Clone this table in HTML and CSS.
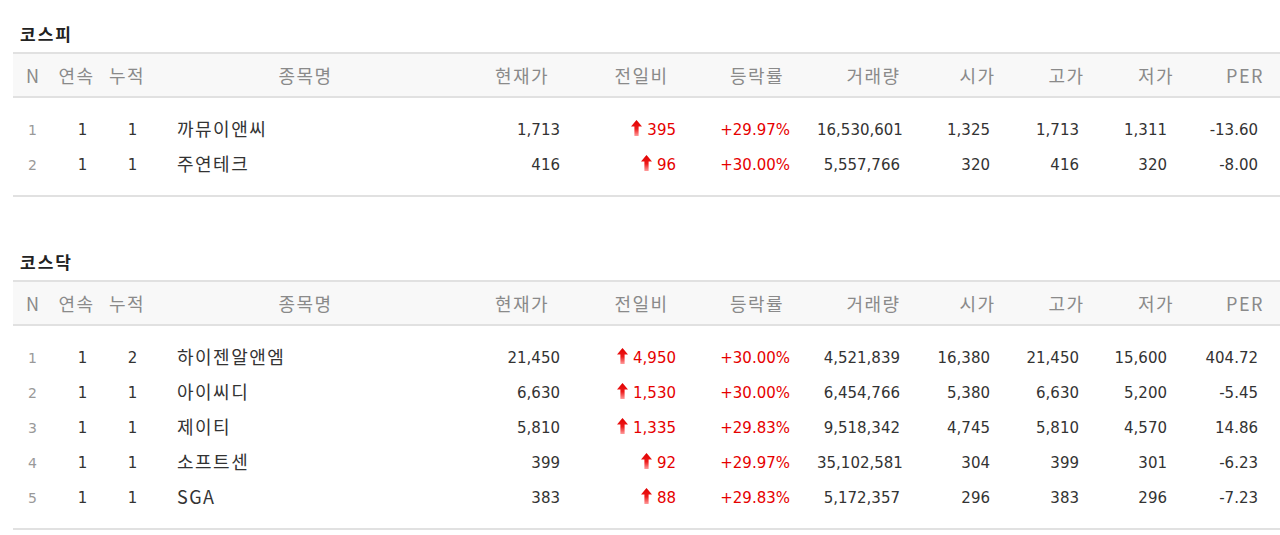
FILE: index.html
```html
<!DOCTYPE html>
<html lang="ko">
<head>
<meta charset="utf-8">
<title>상한가 종목</title>
<link rel="stylesheet" href="styles.css">
</head>
<body>
<svg class="defs" width="0" height="0" aria-hidden="true">
  <defs>
    <linearGradient id="up-grad" x1="0" y1="0" x2="0" y2="1">
      <stop offset="0" stop-color="#e00000"/>
      <stop offset="0.55" stop-color="#ee1c1c"/>
      <stop offset="1" stop-color="#ff9c9c"/>
    </linearGradient>
    <symbol id="up" viewBox="0 0 11 16">
      <polygon points="5.5,0 11,6.5 7.6,6.5 7.6,16 3.4,16 3.4,6.5 0,6.5" fill="url(#up-grad)"/>
    </symbol>
  </defs>
</svg>
<main class="page">
  <section class="market">
    <h2 class="market-title">코스피</h2>
    <div class="board">
      <div class="row head">
        <span class="idx">N</span><span class="run">연속</span><span class="acc">누적</span><span class="name">종목명</span><span class="price">현재가</span><span class="diff">전일비</span><span class="rate">등락률</span><span class="vol">거래량</span><span class="open">시가</span><span class="high">고가</span><span class="low">저가</span><span class="per">PER</span>
      </div>
      <div class="rows">
        <div class="row">
          <span class="idx">1</span><span class="run">1</span><span class="acc">1</span><span class="name">까뮤이앤씨</span><span class="price">1,713</span><span class="diff"><svg class="arrow"><use href="#up"/></svg>395</span><span class="rate">+29.97%</span><span class="vol">16,530,601</span><span class="open">1,325</span><span class="high">1,713</span><span class="low">1,311</span><span class="per">-13.60</span>
        </div>
        <div class="row">
          <span class="idx">2</span><span class="run">1</span><span class="acc">1</span><span class="name">주연테크</span><span class="price">416</span><span class="diff"><svg class="arrow"><use href="#up"/></svg>96</span><span class="rate">+30.00%</span><span class="vol">5,557,766</span><span class="open">320</span><span class="high">416</span><span class="low">320</span><span class="per">-8.00</span>
        </div>
      </div>
    </div>
  </section>
  <section class="market">
    <h2 class="market-title">코스닥</h2>
    <div class="board">
      <div class="row head">
        <span class="idx">N</span><span class="run">연속</span><span class="acc">누적</span><span class="name">종목명</span><span class="price">현재가</span><span class="diff">전일비</span><span class="rate">등락률</span><span class="vol">거래량</span><span class="open">시가</span><span class="high">고가</span><span class="low">저가</span><span class="per">PER</span>
      </div>
      <div class="rows">
        <div class="row">
          <span class="idx">1</span><span class="run">1</span><span class="acc">2</span><span class="name">하이젠알앤엠</span><span class="price">21,450</span><span class="diff"><svg class="arrow"><use href="#up"/></svg>4,950</span><span class="rate">+30.00%</span><span class="vol">4,521,839</span><span class="open">16,380</span><span class="high">21,450</span><span class="low">15,600</span><span class="per">404.72</span>
        </div>
        <div class="row">
          <span class="idx">2</span><span class="run">1</span><span class="acc">1</span><span class="name">아이씨디</span><span class="price">6,630</span><span class="diff"><svg class="arrow"><use href="#up"/></svg>1,530</span><span class="rate">+30.00%</span><span class="vol">6,454,766</span><span class="open">5,380</span><span class="high">6,630</span><span class="low">5,200</span><span class="per">-5.45</span>
        </div>
        <div class="row">
          <span class="idx">3</span><span class="run">1</span><span class="acc">1</span><span class="name">제이티</span><span class="price">5,810</span><span class="diff"><svg class="arrow"><use href="#up"/></svg>1,335</span><span class="rate">+29.83%</span><span class="vol">9,518,342</span><span class="open">4,745</span><span class="high">5,810</span><span class="low">4,570</span><span class="per">14.86</span>
        </div>
        <div class="row">
          <span class="idx">4</span><span class="run">1</span><span class="acc">1</span><span class="name">소프트센</span><span class="price">399</span><span class="diff"><svg class="arrow"><use href="#up"/></svg>92</span><span class="rate">+29.97%</span><span class="vol">35,102,581</span><span class="open">304</span><span class="high">399</span><span class="low">301</span><span class="per">-6.23</span>
        </div>
        <div class="row">
          <span class="idx">5</span><span class="run">1</span><span class="acc">1</span><span class="name">SGA</span><span class="price">383</span><span class="diff"><svg class="arrow"><use href="#up"/></svg>88</span><span class="rate">+29.83%</span><span class="vol">5,172,357</span><span class="open">296</span><span class="high">383</span><span class="low">296</span><span class="per">-7.23</span>
        </div>
      </div>
    </div>
  </section>
</main>
</body>
</html>
```
FILE: styles.css
```css
html, body {
  margin: 0;
  padding: 0;
  background: #ffffff;
}

body {
  font-family: "DejaVu Sans", "Noto Sans CJK KR", sans-serif;
  color: #333333;
  overflow: hidden;
}

.defs {
  position: absolute;
  width: 0;
  height: 0;
}

.page {
  display: flex;
  flex-direction: column;
  gap: 55px;
  padding: 24px 0 0 13px;
}

.market-title {
  margin: 0 0 8px 7px;
  font-family: "Noto Sans CJK KR", sans-serif;
  font-size: 17px;
  font-weight: 700;
  line-height: 20px;
  letter-spacing: 2px;
  color: #222222;
}

.board {
  border-top: 2px solid #e1e1e1;
  border-bottom: 2px solid #e1e1e1;
}

.row {
  display: grid;
  grid-template-columns: 39px 48px 53px 304px 129px 110px 121px 112px 96px 82px 97px 76px;
  align-items: center;
  height: 35px;
  font-size: 15px;
  white-space: nowrap;
}

.head {
  height: 42px;
  background: #f8f8f8;
  border-bottom: 2px solid #e1e1e1;
}

.head span {
  text-align: center;
  font-family: "Noto Sans CJK KR", sans-serif;
  font-size: 18px;
  font-weight: 400;
  letter-spacing: 1.5px;
  color: #8a8a8a;
  padding-left: 1px;
}

.head .idx {
  letter-spacing: 0;
  padding-left: 0;
}

.head .per {
  padding-left: 6px;
}

.rows {
  padding: 14px 0 13px;
}

.rows .idx {
  text-align: center;
  font-size: 14px;
  color: #999999;
}

.rows .run {
  text-align: center;
  padding-left: 13px;
}

.rows .acc {
  text-align: center;
  padding-left: 12px;
}

.rows .name {
  padding-left: 24px;
  padding-bottom: 4px;
  font-family: "Noto Sans CJK KR", sans-serif;
  font-size: 18px;
  line-height: 24px;
  letter-spacing: 1.5px;
  color: #333333;
}

.rows .price,
.rows .rate,
.rows .vol,
.rows .open,
.rows .high,
.rows .low,
.rows .per {
  text-align: right;
}

.rows .price { padding-right: 26px; }
.rows .diff { padding-right: 20px; }
.rows .rate { padding-right: 27px; }
.rows .vol { padding-right: 29px; }
.rows .open { padding-right: 35px; }
.rows .high { padding-right: 28px; }
.rows .low { padding-right: 37px; }
.rows .per { padding-right: 22px; }

.rows .diff {
  display: flex;
  justify-content: flex-end;
  align-items: center;
  gap: 5px;
  color: #e60000;
}

.rows .rate {
  color: #e60000;
}

.arrow {
  width: 11px;
  height: 16px;
  margin-top: -3px;
  flex: none;
}
```
